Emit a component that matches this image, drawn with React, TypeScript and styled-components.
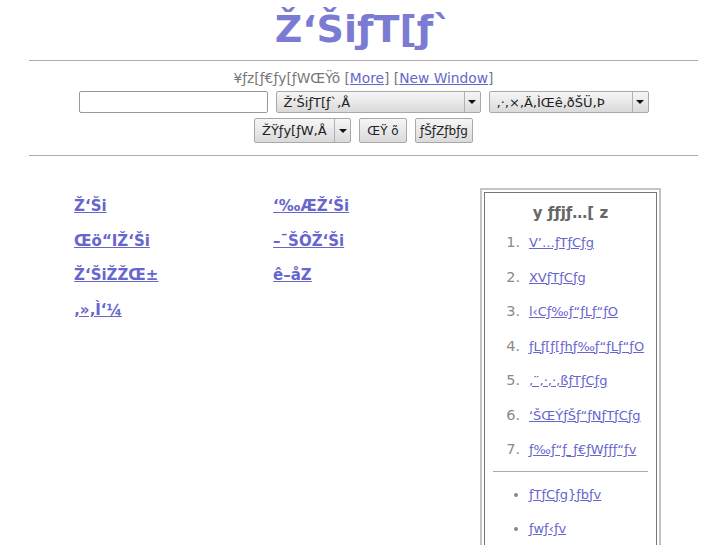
import React from 'react';
import styled, { createGlobalStyle } from 'styled-components';

const GlobalStyle = createGlobalStyle`
  html, body {
    margin: 0;
    padding: 0;
    background: #fff;
  }
  body {
    font-family: "DejaVu Sans", Verdana, sans-serif;
    color: #555;
  }
`;

const Page = styled.div`
  padding-top: 2px;
`;

const Title = styled.h1`
  margin: 0;
  text-align: center;
  font-size: 38px;
  line-height: 54px;
  font-weight: bold;
  color: #7b7bd3;
`;

const Rule = styled.hr<{ mt?: number }>`
  width: 92%;
  margin: ${({ mt }) => mt ?? 0}px auto 0;
  border: 0;
  border-top: 1px solid #aaa;
  height: 0;
`;

const Sub = styled.div`
  text-align: center;
  font-size: 13.8px;
  color: #777;
  margin-top: 8px;
  line-height: 18px;
`;

const SmallLink = styled.a`
  color: #6666cc;
  text-decoration: underline;
`;

const Row = styled.div<{ mt: number }>`
  display: flex;
  justify-content: center;
  gap: 8px;
  margin-top: ${({ mt }) => mt}px;
`;

const TextBox = styled.input`
  width: 189px;
  height: 22px;
  box-sizing: border-box;
  border: 1px solid #999;
  border-radius: 2px;
  background: #fff;
  padding: 0 4px;
  font: 13px "DejaVu Sans", sans-serif;
`;

const SelectBox = styled.div<{ w: number; h: number }>`
  width: ${({ w }) => w}px;
  height: ${({ h }) => h}px;
  box-sizing: border-box;
  display: flex;
  border: 1px solid #a8a8a8;
  border-radius: 2px;
  background: linear-gradient(#f6f6f6, #dadada);
  font-size: 13px;
  color: #222;
`;

const SelectLabel = styled.span`
  flex: 1;
  display: flex;
  align-items: center;
  padding-left: 7px;
  white-space: nowrap;
  overflow: hidden;
`;

const SelectArrow = styled.span`
  width: 15px;
  border-left: 1px solid #b0b0b0;
  display: flex;
  align-items: center;
  justify-content: center;
  &::after {
    content: '';
    border-left: 4px solid transparent;
    border-right: 4px solid transparent;
    border-top: 4px solid #111;
  }
`;

const Button = styled.button<{ w: number }>`
  width: ${({ w }) => w}px;
  height: 25px;
  box-sizing: border-box;
  border: 1px solid #a8a8a8;
  border-radius: 2px;
  background: linear-gradient(#f6f6f6, #dadada);
  font: 12px "DejaVu Sans", sans-serif;
  color: #222;
  padding: 0;
`;

const Main = styled.div`
  width: 92%;
  margin: 32px auto 0;
  display: flex;
  justify-content: space-between;
  padding: 0 37px 0 45px;
  box-sizing: border-box;
`;

const LinkGrid = styled.div`
  display: grid;
  grid-template-columns: 199px 199px;
  grid-auto-rows: 34.5px;
  align-content: start;
  margin-top: 8px;
`;

const BigLink = styled.a`
  font-size: 15px;
  font-weight: bold;
  color: #6666cc;
  text-decoration: underline;
`;

const MenuOuter = styled.div`
  width: 181px;
  height: 380px;
  box-sizing: border-box;
  border: 2px solid #c4c4c4;
  padding: 2px;
`;

const MenuInner = styled.div`
  height: 100%;
  box-sizing: border-box;
  border: 1px solid #777;
  padding: 0 8px;
`;

const MenuTitle = styled.div`
  text-align: center;
  font-weight: bold;
  font-size: 15px;
  color: #666;
  margin-top: 10px;
  line-height: 20px;
`;

const List = styled.ol`
  margin: 2px 0 0;
  padding-left: 36px;
  font-size: 14.5px;
  color: #8a8a8a;
  li {
    height: 34.5px;
    line-height: 34.5px;
  }
  li::marker {
    content: counter(list-item) ".\\2002\\200A";
  }
`;

const Bullets = styled.ul`
  margin: 0;
  padding-left: 36px;
  font-size: 14px;
  color: #888;
  li {
    height: 34.5px;
    line-height: 34.5px;
  }
`;

const ItemLink = styled.a`
  font-size: 13px;
  color: #6666cc;
  text-decoration: underline;
`;

const MenuRule = styled.hr`
  margin: 4px 0 5px;
  border: 0;
  border-top: 1px solid #aaa;
`;

const links = [
  'Ž‘Ši',
  '‘‰ÆŽ‘Ši',
  'Œö“IŽ‘Ši',
  '–¯ŠÔŽ‘Ši',
  'Ž‘ŠiŽŽŒ±',
  'ê–åZ',
  '‚»‚Ì‘¼',
];

const menu = [
  'V’…ƒTƒCƒg',
  'XVƒTƒCƒg',
  'l‹Cƒ‰ƒ“ƒLƒ“ƒO',
  'ƒLƒ[ƒ[ƒhƒ‰ƒ“ƒLƒ“ƒO',
  '‚¨‚·‚·‚ßƒTƒCƒg',
  '‘ŠŒÝƒŠƒ“ƒNƒTƒCƒg',
  'ƒ‰ƒ“ƒ_ƒ€ƒWƒƒƒ“ƒv',
];

const extras = ['ƒTƒCƒg}ƒbƒv', 'ƒwƒ‹ƒv'];

const Select: React.FC<{ w: number; h: number; label: string }> = ({ w, h, label }) => (
  <SelectBox w={w} h={h}>
    <SelectLabel>{label}</SelectLabel>
    <SelectArrow />
  </SelectBox>
);

const App: React.FC = () => {
  return (
    <Page>
      <GlobalStyle />
      <Title>{'Ž‘ŠiƒT[ƒ`'}</Title>
      <Rule mt={4} />
      <Sub>
        {'¥ƒz[ƒ€ƒy[ƒWŒŸõ ['}<SmallLink href="#">More</SmallLink>{'] ['}
        <SmallLink href="#">New Window</SmallLink>]
      </Sub>
      <Row mt={4}>
        <TextBox />
        <Select w={205} h={22} label="Ž‘ŠiƒT[ƒ`‚Å" />
        <Select w={160} h={22} label="‚·‚×‚Ä‚ÌŒê‚ðŠÜ‚Þ" />
      </Row>
      <Row mt={5}>
        <Select w={97} h={25} label="ŽŸƒy[ƒW‚Å" />
        <Button w={48}>{'ŒŸ õ'}</Button>
        <Button w={58}>{'ƒŠƒZƒbƒg'}</Button>
      </Row>
      <Rule mt={12} />
      <Main>
        <LinkGrid>
          {links.map((l) => (
            <div key={l}>
              <BigLink href="#">{l}</BigLink>
            </div>
          ))}
        </LinkGrid>
        <MenuOuter>
          <MenuInner>
            <MenuTitle>{'y ƒƒjƒ…[ z'}</MenuTitle>
            <List>
              {menu.map((m) => (
                <li key={m}>
                  <ItemLink href="#">{m}</ItemLink>
                </li>
              ))}
            </List>
            <MenuRule />
            <Bullets>
              {extras.map((m) => (
                <li key={m}>
                  <ItemLink href="#">{m}</ItemLink>
                </li>
              ))}
            </Bullets>
          </MenuInner>
        </MenuOuter>
      </Main>
    </Page>
  );
};

export default App;
